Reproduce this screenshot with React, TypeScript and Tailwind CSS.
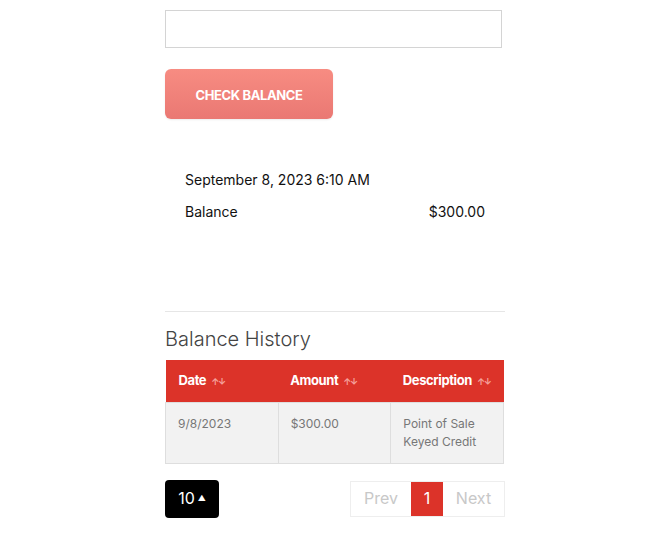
const rows = [
  { date: "9/8/2023", amount: "$300.00", description: "Point of Sale Keyed Credit" },
];

function SortIcon() {
  return (
    <span className="ml-[5px] inline-flex items-center text-[9px] leading-none text-[#f5a19b]">
      <span>↑</span>
      <span className="-ml-[1px]">↓</span>
    </span>
  );
}

export default function App() {
  return (
    <div
      className="min-h-[546px] w-[652px] bg-white text-[#222]"
      style={{ fontFamily: "Inter, 'Noto Sans', sans-serif" }}
    >
      <div className="ml-[165px] w-[340px] pt-[10px]">
        <input
          type="text"
          className="block h-[38px] w-[337px] border border-[#d4d4d4] bg-white px-3 outline-none"
        />

        <button className="mt-[21px] flex h-[50px] w-[168px] items-center justify-center rounded-[6px] bg-gradient-to-b from-[#f78c82] to-[#ea7873] pt-[3px] text-[13px] font-bold uppercase tracking-[-0.4px] text-white shadow-[0_1px_2px_rgba(0,0,0,0.08)]">
          Check Balance
        </button>

        <div className="mt-[50px] px-[20px] text-[14px] font-normal text-[#111]">
          <div className="h-[22px] leading-[22px]">September 8, 2023 6:10 AM</div>
          <div className="mt-[10px] flex h-[22px] justify-between leading-[22px]">
            <span>Balance</span>
            <span>$300.00</span>
          </div>
        </div>

        <div className="mt-[88px] border-t border-[#e6e6e6]" />

        <h2 className="mt-[14px] text-[20px] font-light leading-[26px] text-[#444]">
          Balance History
        </h2>

        <table className="mt-[8px] w-[339px] table-fixed border-collapse text-left">
          <thead>
            <tr className="h-[42px] bg-[#dc3329] text-[13px] font-bold text-white">
              <th className="whitespace-nowrap px-[13px] tracking-[-0.4px]">
                Date
                <SortIcon />
              </th>
              <th className="whitespace-nowrap px-[12px] tracking-[-0.4px]">
                Amount
                <SortIcon />
              </th>
              <th className="whitespace-nowrap px-[12px] tracking-[-0.4px]">
                Description
                <SortIcon />
              </th>
            </tr>
          </thead>
          <tbody>
            {rows.map((r) => (
              <tr key={r.date} className="bg-[#f2f2f2] align-top text-[12px] leading-[18px] text-[#777]">
                <td className="h-[61px] border border-[#dedede] px-[12px] pt-[12px]">{r.date}</td>
                <td className="border border-[#dedede] px-[12px] pt-[12px]">{r.amount}</td>
                <td className="border border-[#dedede] px-[12px] pt-[12px]">{r.description}</td>
              </tr>
            ))}
          </tbody>
        </table>

        <div className="mt-[16px] flex items-center justify-between">
          <button className="flex h-[38px] w-[54px] items-center justify-center gap-[3px] rounded-[4px] bg-black pb-[1px] text-[16px] text-white">
            10
            <span className="text-[8px]">▲</span>
          </button>
          <div className="flex h-[36px] border border-[#eeeeee] text-[16px]">
            <span className="flex w-[60px] items-center justify-center pb-[1px] text-[#c8c8c8]">Prev</span>
            <span className="flex w-[32px] items-center justify-center bg-[#dc3329] pb-[1px] text-white">1</span>
            <span className="flex w-[61px] items-center justify-center pb-[1px] text-[#c8c8c8]">Next</span>
          </div>
        </div>
      </div>
    </div>
  );
}
